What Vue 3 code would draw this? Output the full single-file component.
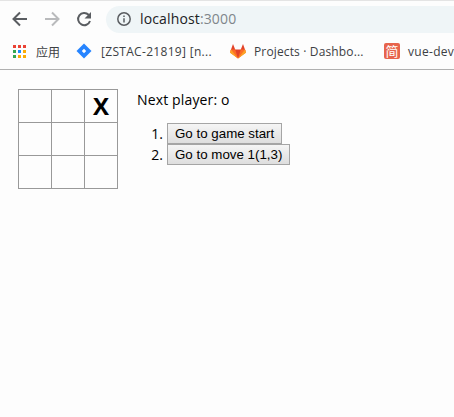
<script setup>
const squares = ['', '', 'X', '', '', '', '', '', '']
const moves = ['Go to game start', 'Go to move 1(1,3)']
const appColors = ['#ea4335', '#ea4335', '#ea4335', '#34a853', '#1a8cff', '#fbac05', '#34a853', '#fbac05', '#fbac05']
</script>

<template>
  <div class="browser">
    <header class="chrome">
      <div class="toolbar">
        <svg class="nav" viewBox="0 0 16 16"><path d="M15 8H2M8 1.5 1.5 8 8 14.5" /></svg>
        <svg class="nav forward" viewBox="0 0 16 16"><path d="M1 8h13M8 1.5 14.5 8 8 14.5" /></svg>
        <svg class="nav reload" viewBox="0 0 16 16">
          <path d="M14 10A6.100 6.100 0 1 1 12.600 3.800L13.500 5" />
          <path class="solid" d="M15 1v6.500H8.500z" />
        </svg>
        <div class="address">
          <svg class="info-icon" viewBox="0 0 14 14">
            <circle cx="7" cy="7" r="6.2" />
            <path d="M7 6.2v4.3M7 3.4v1.7" />
          </svg>
          <span class="url">localhost<span class="port">:3000</span></span>
        </div>
      </div>
      <nav class="bookmarks">
        <div class="apps"><i v-for="(c, i) in appColors" :key="i" :style="{ background: c }"></i></div>
        <span class="label cjk">应用</span>
        <svg class="jira" viewBox="0 0 16 16">
          <path fill="#2684ff" d="M8 .5 15.500 8 8 15.500.5 8z" />
          <path fill="#fff" d="M8 5.800 10.200 8 8 10.200 5.800 8z" />
        </svg>
        <span class="label jira-label">[ZSTAC-21819] [n...</span>
        <svg class="gitlab" viewBox="0 0 16 15">
          <path fill="#e24329" d="M3 0 5.200 5.500h5.600L13 0l2.500 7L8 14.500.5 7z" />
          <path fill="#fc6d26" d="M1 5.500h4.200L8 14.500 0 8.500zM15 5.500h-4.200L8 14.500l8-6z" />
          <path fill="#fca326" d="M1 5.500 0 8.700l8 5.800zM15 5.500l1 3.200-8 5.800z" />
        </svg>
        <span class="label gitlab-label">Projects · Dashbo...</span>
        <span class="jian">简</span>
        <span class="label vue-label">vue-dev</span>
      </nav>
    </header>
    <main class="game">
      <div class="board">
        <div v-for="(s, i) in squares" :key="i" class="square">{{ s }}</div>
      </div>
      <section class="info">
        <div class="status">Next player: o</div>
        <ol>
          <li v-for="(m, i) in moves" :key="m"><span class="num">{{ i + 1 }}.</span><button>{{ m }}</button></li>
        </ol>
      </section>
    </main>
  </div>
</template>

<style>
body { background: #fdfdfd; overflow: hidden; }
</style>

<style scoped>
.browser { width: 454px; height: 417px; overflow: hidden; background: #fdfdfd; color: #000; font-family: "Open Sans", "Noto Sans CJK SC", sans-serif; }
.chrome { box-sizing: border-box; height: 70px; border-top: 1px solid #e4e4e4; border-bottom: 1px solid #b0b0b0; background: #fdfdfd; }
.toolbar { display: flex; align-items: center; height: 36px; padding: 0 0 0 12px; }
.nav { flex: none; width: 16px; height: 16px; fill: none; stroke: #5a5d61; stroke-width: 2; margin-right: 16px; }
.forward { stroke: #b9babc; }
.reload { margin-right: 14px; }
.solid { fill: #5a5d61; stroke: none; }
.address { flex: 1; display: flex; align-items: center; height: 27px; padding-left: 11px; border-radius: 14px 0 0 14px; background: #eff5f7; }
.info-icon { width: 14px; height: 14px; fill: none; stroke: #5a5d61; stroke-width: 1.5; }
.url { margin-left: 9px; font-size: 14px; line-height: 20px; letter-spacing: 0.14px; color: #202124; white-space: nowrap; }
.port { color: #80868b; }
.bookmarks { display: flex; align-items: center; height: 29px; padding-left: 13px; white-space: nowrap; }
.apps { flex: none; display: grid; grid-template-columns: repeat(3, 3px); gap: 2px; margin-top: -1px; }
.apps i { width: 3px; height: 3px; }
.label { flex: none; font-size: 12px; line-height: 18px; color: #3c4043; }
.cjk { width: 24px; margin-left: 10px; font-family: "Noto Sans CJK SC", sans-serif; }
.jira { flex: none; width: 16px; height: 16px; margin-left: 16px; margin-top: -1px; }
.jira-label { width: 111px; margin-left: 9px; letter-spacing: 0.31px; }
.gitlab { flex: none; width: 16px; height: 15px; margin-left: 18px; margin-top: -1px; }
.gitlab-label { width: 110px; margin-left: 8px; letter-spacing: 0.14px; }
.jian { flex: none; width: 16px; height: 16px; margin-left: 20px; margin-top: -1px; border-radius: 2px; background: #e7644c; color: #fff; font: 13px/15px "Noto Sans CJK SC", sans-serif; text-align: center; }
.vue-label { margin-left: 8px; letter-spacing: 0.3px; }
.game { display: flex; padding: 19px 18px; }
.board { flex: none; display: grid; grid-template-columns: repeat(3, 33px); grid-auto-rows: 33px; height: 99px; border-top: 1px solid #999; border-left: 1px solid #999; }
.square { box-sizing: border-box; border-right: 1px solid #999; border-bottom: 1px solid #999; font: bold 24px/32px "Open Sans", sans-serif; text-align: center; }
.info { margin-left: 19px; font-size: 14px; line-height: 21px; }
.status { height: 21px; letter-spacing: 0.15px; white-space: nowrap; }
ol { margin: 13px 0 0; padding: 0; list-style: none; }
li { display: flex; height: 21px; }
.num { width: 26px; margin-right: 4px; text-align: right; }
button { box-sizing: border-box; height: 21px; margin: 0; padding: 0 7px; border: 1px solid #a5a5a5; border-radius: 0; background: linear-gradient(#f5f5f5, #dedede); color: #000; font: 13.333px/19px "Liberation Sans", Arial, sans-serif; white-space: nowrap; }
</style>
